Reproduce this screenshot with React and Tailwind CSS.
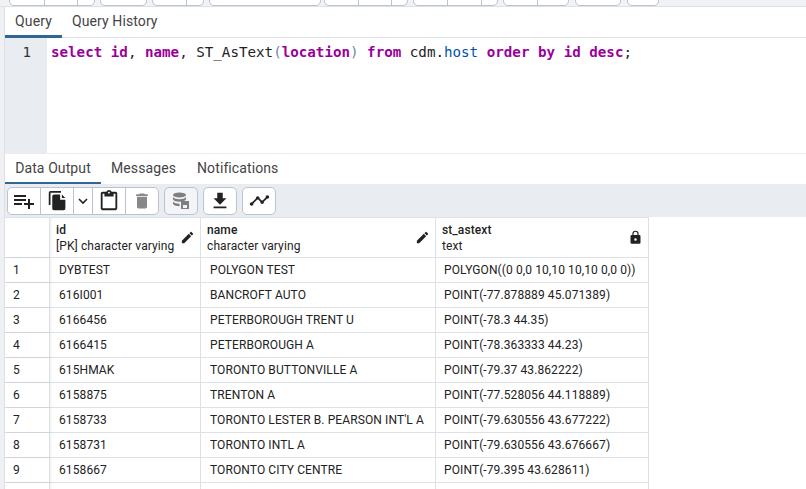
import React from "react";

const K = ({ children }) => <span className="text-[#990099] font-bold">{children}</span>;

const topGroups = [
  { w: 86, divs: [34, 67], ml: 9 },
  { w: 47, divs: [], ml: 5 },
  { w: 52, divs: [33], ml: 5 },
  { w: 112, divs: [], ml: 5 },
  { w: 84, divs: [33, 66], ml: 3 },
  { w: 85, divs: [33, 67], ml: 5 },
  { w: 66, divs: [33], ml: 5 },
  { w: 46, divs: [], ml: 6 },
  { w: 32, divs: [], ml: 6 },
];

const rows = [
  ["1", "DYBTEST", "POLYGON TEST", "POLYGON((0 0,0 10,10 10,10 0,0 0))"],
  ["2", "616I001", "BANCROFT AUTO", "POINT(-77.878889 45.071389)"],
  ["3", "6166456", "PETERBOROUGH TRENT U", "POINT(-78.3 44.35)"],
  ["4", "6166415", "PETERBOROUGH A", "POINT(-78.363333 44.23)"],
  ["5", "615HMAK", "TORONTO BUTTONVILLE A", "POINT(-79.37 43.862222)"],
  ["6", "6158875", "TRENTON A", "POINT(-77.528056 44.118889)"],
  ["7", "6158733", "TORONTO LESTER B. PEARSON INT'L A", "POINT(-79.630556 43.677222)"],
  ["8", "6158731", "TORONTO INTL A", "POINT(-79.630556 43.676667)"],
  ["9", "6158667", "TORONTO CITY CENTRE", "POINT(-79.395 43.628611)"],
];

const Pencil = () => (
  <svg width="15" height="15" viewBox="0 0 24 24" fill="#222"><path d="M3 17.25V21h3.75L17.81 9.94l-3.75-3.75L3 17.25zM20.71 7.04a1 1 0 0 0 0-1.41l-2.34-2.34a1 1 0 0 0-1.41 0l-1.83 1.83 3.75 3.75 1.83-1.83z" /></svg>
);

const Lock = () => (
  <svg width="15" height="15" viewBox="0 0 24 24" fill="#222"><path d="M18 8h-1V6a5 5 0 0 0-10 0v2H6a2 2 0 0 0-2 2v10a2 2 0 0 0 2 2h12a2 2 0 0 0 2-2V10a2 2 0 0 0-2-2zm-6 9a2 2 0 1 1 0-4 2 2 0 0 1 0 4zm3.1-9H8.9V6a3.1 3.1 0 0 1 6.2 0v2z" /></svg>
);

const Icon = ({ d, size = 22, fill = "#222" }) => (
  <svg width={size} height={size} viewBox="0 0 24 24" fill={fill}><path d={d} /></svg>
);

const Btn = ({ w, last, children }) => (
  <div className={`h-full flex items-center justify-center ${w} ${last ? "" : "border-r border-[#bcc3d0]"}`}>{children}</div>
);

const Group = ({ className = "", children }) => (
  <div className={`h-[28px] flex border border-[#bcc3d0] rounded-[5px] overflow-hidden ${className}`}>{children}</div>
);

export default function App() {
  return (
    <div className="w-[806px] h-[489px] overflow-hidden bg-white flex font-['Roboto',sans-serif] text-[#222]">
      <div className="w-[5px] h-full shrink-0 bg-[#eef0f4] border-r border-[#dde0e6]" />
      <div className="w-[801px] flex flex-col">
        {/* cropped main toolbar */}
        <div className="h-[7px] -ml-[5px] w-[806px] shrink-0 bg-[#f0f2f5] border-b border-[#dde0e6] flex items-end overflow-hidden">
          {topGroups.map((g, i) => (
            <div key={i} style={{ width: g.w, marginLeft: g.ml }} className="relative h-[10px] shrink-0 bg-white border border-[#bcc3d0] rounded-[5px] overflow-hidden">
              {g.divs.map((d) => (
                <div key={d} style={{ left: d }} className="absolute top-0 bottom-0 w-px bg-[#bcc3d0]" />
              ))}
            </div>
          ))}
        </div>

        {/* Query tabs */}
        <div className="h-[31px] shrink-0 flex border-b border-[#dde0e6] text-[14px] text-[#444] tracking-[0.1px]">
          <div className="w-[57px] h-[31px] flex items-center justify-center border-b-[3px] border-[#326690] pt-[1px] shrink-0">Query</div>
          <div className="px-[10px] flex items-center pb-[2px]">Query History</div>
        </div>

        {/* Editor */}
        <div className="h-[115px] shrink-0 flex">
          <div className="w-[42px] shrink-0 bg-[#e9ecf1] text-right pr-[16px] pt-[4px] font-['DejaVu_Sans_Mono',monospace] text-[14.2px] leading-[20px] text-[#333]">1</div>
          <div className="pl-[4px] pt-[4px] font-['DejaVu_Sans_Mono',monospace] text-[14.2px] leading-[20px] whitespace-pre text-[#222]">
            <K>select</K> <K>id</K>, <K>name</K>, ST_AsText<span className="text-[#6a8ba8]">(</span><K>location</K><span className="text-[#6a8ba8]">)</span> <K>from</K> cdm.<span className="text-[#0055aa]">host</span> <K>order</K> <K>by</K> <K>id</K> <K>desc</K>;
          </div>
        </div>

        {/* Output tabs */}
        <div className="h-[32px] shrink-0 flex border-t-[1px] border-[#e8ebf0] text-[14px] text-[#444] bg-white tracking-[0.1px]">
          <div className="w-[96px] h-[31px] flex items-center justify-center border-b-[3px] border-[#326690] shrink-0">Data Output</div>
          <div className="ml-[10px] flex items-center pb-[2px] h-[31px]">Messages</div>
          <div className="ml-[21px] flex items-center pb-[2px] h-[31px]">Notifications</div>
        </div>

        {/* Data toolbar */}
        <div className="h-[33px] -mt-[1px] shrink-0 bg-[#e9ecf1] flex items-center pl-[2px]">
          <Group className="bg-white">
            <Btn w="w-[33px]"><Icon size={24} d="M14 10H2v2h12v-2zm0-4H2v2h12V6zm4 8v-4h-2v4h-4v2h4v4h2v-4h4v-2h-4zM2 16h8v-2H2v2z" /></Btn>
            <Btn w="w-[33px]"><Icon size={21} d="M16 1H4a2 2 0 0 0-2 2v14h2V3h12zM8 5h7v6h6v10a2 2 0 0 1-2 2H8a2 2 0 0 1-2-2V7a2 2 0 0 1 2-2zM17 5l4 4h-4z" /></Btn>
            <Btn w="w-[19px]">
              <svg width="10" height="8" viewBox="0 0 10 8" fill="none" stroke="#222" strokeWidth="1.6"><path d="M1 2l4 4 4-4" /></svg>
            </Btn>
            <Btn w="w-[33px]"><Icon size={22} d="M19 2h-4.180C14.400.84 13.300 0 12 0S9.600.84 9.180 2H5c-1.100 0-2 .9-2 2v16c0 1.100.9 2 2 2h14c1.100 0 2-.9 2-2V4c0-1.100-.9-2-2-2zm-7 0c.55 0 1 .45 1 1s-.45 1-1 1-1-.45-1-1 .45-1 1-1zm7 18H5V4h2v3h10V4h2v16z" /></Btn>
            <Btn w="w-[32px]" last><Icon size={20} fill="#888" d="M6 19c0 1.100.9 2 2 2h8c1.100 0 2-.9 2-2V7H6v12zM19 4h-3.500l-1-1h-5l-1 1H5v2h14V4z" /></Btn>
          </Group>
          <Group className="ml-[5px] bg-[#f3f4f7]">
            <Btn w="w-[32px]" last>
              <svg width="18" height="18" viewBox="0 0 18 18" fill="#7f7f7f"><ellipse cx="7.500" cy="3" rx="6.500" ry="2.500" /><path d="M1 5c1 1.600 3.500 2.200 6.500 2.200S13 6.600 14 5v2.500C13 9 10.500 9.700 7.500 9.700S2 9 1 7.500zM1 9.500c1 1.500 3.500 2.200 6.500 2.200v2.500C4.500 14.200 2 13.500 1 12z" /><path d="M9 9h8v8H9z" /><path d="M11 13h4v3h-4z" fill="#f3f4f7" /></svg>
            </Btn>
          </Group>
          <Group className="ml-[5px] bg-white">
            <Btn w="w-[32px]" last><Icon size={22} d="M19 9h-4V3H9v6H5l7 7 7-7zM5 18v2h14v-2H5z" /></Btn>
          </Group>
          <Group className="ml-[5px] bg-white">
            <Btn w="w-[32px]" last><Icon size={21} d="M23 8c0 1.100-.9 2-2 2-.18 0-.35-.02-.51-.07l-3.560 3.550c.05.16.07.34.07.52 0 1.100-.9 2-2 2s-2-.9-2-2c0-.18.02-.36.07-.52l-2.550-2.550c-.16.05-.34.07-.52.07s-.36-.02-.52-.07l-4.550 4.560c.05.16.07.33.07.51 0 1.100-.9 2-2 2s-2-.9-2-2 .9-2 2-2c.18 0 .35.02.51.07l4.560-4.550C8.020 9.360 8 9.180 8 9c0-1.100.9-2 2-2s2 .9 2 2c0 .18-.02.36-.07.52l2.550 2.550c.16-.05.34-.07.52-.07s.36.02.52.07l3.550-3.560C19.020 8.350 19 8.180 19 8c0-1.100.9-2 2-2s2 .9 2 2z" /></Btn>
          </Group>
        </div>

        {/* Table */}
        <div className="flex-1 min-h-0 overflow-hidden border-t border-[#dde0e6] w-[644px] border-r text-[12px] tracking-[0.1px] text-[#222]">
          <div className="flex h-[40px] border-b border-[#dde0e6]">
            <div className="w-[45px] shrink-0 border-r border-[#dde0e6] shadow-[1px_0_2px_rgba(0,0,0,0.08)]" />
            <div className="w-[151px] shrink-0 border-r border-[#dde0e6] pl-[6px] pr-[5px] flex items-center justify-between">
              <div className="leading-[16px] whitespace-nowrap"><div className="font-medium">id</div><div>[PK] character varying</div></div>
              <Pencil />
            </div>
            <div className="w-[235px] shrink-0 border-r border-[#dde0e6] pl-[6px] pr-[5px] flex items-center justify-between">
              <div className="leading-[16px]"><div className="font-medium">name</div><div>character varying</div></div>
              <Pencil />
            </div>
            <div className="flex-1 pl-[6px] pr-[5px] flex items-center justify-between">
              <div className="leading-[16px]"><div className="font-medium">st_astext</div><div>text</div></div>
              <Lock />
            </div>
          </div>
          {rows.map((r) => (
            <div key={r[0]} className="flex h-[25px] border-b border-[#dde0e6] items-stretch whitespace-nowrap">
              <div className="w-[45px] shrink-0 border-r border-[#dde0e6] pl-[8px] flex items-center shadow-[1px_0_2px_rgba(0,0,0,0.08)]">{r[0]}</div>
              <div className="w-[151px] shrink-0 border-r border-[#dde0e6] pl-[9px] flex items-center">{r[1]}</div>
              <div className="w-[235px] shrink-0 border-r border-[#dde0e6] pl-[9px] flex items-center">{r[2]}</div>
              <div className="flex-1 pl-[8px] flex items-center">{r[3]}</div>
            </div>
          ))}
          <div className="flex h-[25px]">
            <div className="w-[45px] shrink-0 border-r border-[#dde0e6] shadow-[1px_0_2px_rgba(0,0,0,0.08)]" />
            <div className="w-[151px] shrink-0 border-r border-[#dde0e6]" />
            <div className="w-[235px] shrink-0 border-r border-[#dde0e6]" />
          </div>
        </div>
      </div>
    </div>
  );
}
